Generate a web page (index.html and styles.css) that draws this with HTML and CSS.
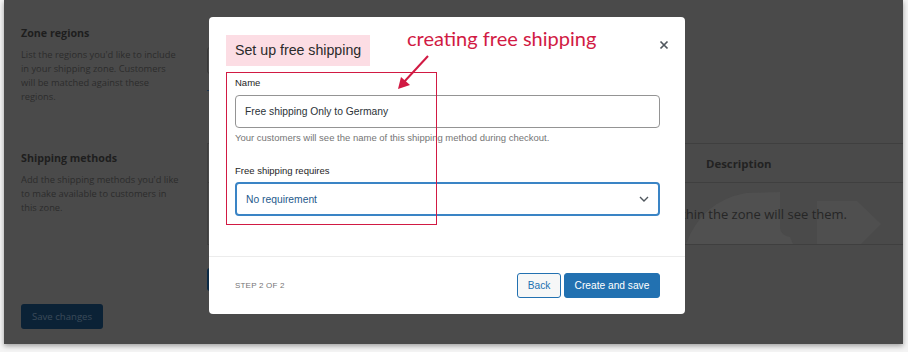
FILE: index.html
```html
<!DOCTYPE html>
<html>
<head>
<meta charset="utf-8">
<link rel="stylesheet" href="styles.css">
</head>
<body>
<div class="frame">
  <section class="sec sec1">
    <div class="desc">
      <h3>Zone regions</h3>
      <p>List the regions you'd like to include in your shipping zone. Customers will be matched against these regions.</p>
    </div>
    <div class="content c1">
      <div class="bg-input"></div>
      <span class="bg-link"></span>
    </div>
  </section>
  <section class="sec sec2">
    <div class="desc">
      <h3>Shipping methods</h3>
      <p>Add the shipping methods you'd like to make available to customers in this zone.</p>
    </div>
    <div class="content">
      <div class="tbl">
        <div class="thead"><span class="th-desc">Description</span></div>
        <div class="trow">
          <svg class="watermark" width="210" height="61" viewBox="0 0 210 61">
            <path d="M6 61 Q22 18 66 10 L100 9 L100 44 Q100 52 110 54 L113 61 Z" fill="#505050"/>
            <path d="M137 18 L177 18 L201 41 L181 61 L137 61 Z" fill="#4f4f4f"/>
          </svg>
          <span class="row-text">Only customers within the zone will see them.</span>
        </div>
      </div>
      <div class="bg-btn"></div>
    </div>
  </section>
  <button class="save">Save changes</button>

  <div class="modal">
    <div class="m-head">
      <h2 class="m-title">Set up free shipping</h2>
      <button class="m-close" aria-label="Close">
        <svg width="10" height="10" viewBox="0 0 10 10"><path d="M1.5 1.5l7 7M8.5 1.5l-7 7" stroke="#50575e" stroke-width="1.7" fill="none"/></svg>
      </button>
    </div>
    <div class="m-body">
      <label class="m-label">Name</label>
      <div class="m-input">Free shipping Only to Germany</div>
      <p class="m-help">Your customers will see the name of this shipping method during checkout.</p>
      <label class="m-label l2">Free shipping requires</label>
      <div class="m-select">
        <span>No requirement</span>
        <svg width="10" height="6" viewBox="0 0 10 6"><path d="M1 1l4 4 4-4" stroke="#50575e" stroke-width="1.4" fill="none"/></svg>
      </div>
    </div>
    <div class="m-foot">
      <span class="step">STEP 2 OF 2</span>
      <div class="btns">
        <button class="b-back">Back</button>
        <button class="b-create">Create and save</button>
      </div>
    </div>

    <div class="anno-box"></div>
    <div class="anno-text">creating free shipping</div>
    <svg class="anno-arrow" width="40" height="40" viewBox="0 0 40 40">
      <path d="M36 2 L12 28" stroke="#d11a43" stroke-width="2" fill="none"/>
      <path d="M6 35 L9 23 L18 31 Z" fill="#d11a43"/>
    </svg>
  </div>
</div>
</body>
</html>
```
FILE: styles.css
```css
html, body {
  margin: 0;
  padding: 0;
}
body {
  width: 908px;
  height: 352px;
  overflow: hidden;
  background: #f4f4f4;
}
.frame {
  position: relative;
  margin-left: 4px;
  width: 899px;
  height: 344px;
  background: #4a4a4a;
  box-shadow: 0 2px 5px rgba(0, 0, 0, 0.35);
  padding-left: 17px;
  box-sizing: border-box;
  font-family: "Open Sans", sans-serif;
  overflow: hidden;
}
.sec {
  display: grid;
  grid-template-columns: 186px 696px;
}
.sec1 {
  height: 143px;
}
.desc h3 {
  margin: 0;
  font-size: 10.7px;
  line-height: 14px;
  font-weight: 700;
  color: #1e1e1e;
}
.desc p {
  margin: 8px 0 0;
  width: 161px;
  font-size: 9.3px;
  line-height: 14px;
  color: #2c2c2c;
}
.sec1 .desc {
  padding-top: 26px;
}
.sec2 .desc {
  padding-top: 8px;
}
.c1 {
  padding-top: 47px;
}
.bg-input {
  height: 25px;
  width: 400px;
  border: 1px solid #3a3a3a;
  border-radius: 3px;
}
.bg-link {
  display: block;
  margin-top: 16px;
  width: 60px;
  height: 1px;
  background: #1c3550;
}
.tbl {
  border: 1px solid #3f3f3f;
  border-right: none;
}
.thead {
  height: 38px;
  border-bottom: 1px solid #3f3f3f;
  display: flex;
  align-items: center;
}
.th-desc {
  margin-left: 498px;
  font-size: 11.4px;
  font-weight: 700;
  color: #222;
}
.trow {
  position: relative;
  height: 61px;
  display: flex;
  align-items: center;
  justify-content: flex-end;
  padding-right: 56px;
  overflow: hidden;
}
.watermark {
  position: absolute;
  left: 472px;
  top: 0;
}
.row-text {
  position: relative;
  white-space: nowrap;
  font-size: 13px;
  color: #262626;
}
.bg-btn {
  margin-top: 23px;
  width: 120px;
  height: 23px;
  border-radius: 3px;
  background: #0b2a45;
}
.save {
  display: block;
  margin-top: 13px;
  width: 82px;
  height: 25px;
  padding: 0;
  border: none;
  border-radius: 3px;
  background: #0b2236;
  color: #3b4b5a;
  font-family: "Open Sans", sans-serif;
  font-size: 9.6px;
}

/* modal */
.modal {
  position: absolute;
  left: 205px;
  top: 17px;
  width: 476px;
  height: 297px;
  background: #fff;
  border-radius: 4px;
  display: flex;
  flex-direction: column;
  font-family: "Liberation Sans", Arial, sans-serif;
  color: #1e1e1e;
}
.m-head {
  display: flex;
  justify-content: space-between;
  align-items: flex-start;
  padding: 18px 15px 0 17px;
}
.m-title {
  margin: 0;
  height: 31px;
  line-height: 31px;
  padding: 0 9px;
  background: #fcdde4;
  font-size: 14.2px;
  font-weight: 400;
  color: #2a2a2a;
}
.m-close {
  margin-top: 4px;
  width: 12px;
  height: 12px;
  padding: 0;
  border: none;
  background: none;
  display: flex;
  align-items: center;
  justify-content: center;
}
.m-body {
  flex: 1;
  padding: 0 25px 0 26px;
  display: flex;
  flex-direction: column;
}
.m-label {
  display: block;
  margin-top: 11px;
  font-size: 9.5px;
  line-height: 12px;
  color: #1e1e1e;
}
.m-label.l2 {
  margin-top: 21px;
}
.m-input {
  margin-top: 6px;
  height: 33px;
  box-sizing: border-box;
  border: 1px solid #949494;
  border-radius: 4px;
  padding: 0 9px;
  display: flex;
  align-items: center;
  font-size: 10.3px;
  color: #2c3338;
}
.m-help {
  margin: 4px 0 0;
  font-size: 9.5px;
  line-height: 12px;
  color: #757575;
}
.m-select {
  margin-top: 5px;
  height: 34px;
  box-sizing: border-box;
  border: 2px solid #3a84c5;
  border-radius: 4px;
  padding: 0 9px 0 9px;
  display: flex;
  align-items: center;
  justify-content: space-between;
  font-size: 10.3px;
  color: #1f5a8c;
}
.m-foot {
  height: 58px;
  box-sizing: border-box;
  border-top: 1px solid #ececec;
  padding: 0 25px 0 26px;
  display: flex;
  align-items: center;
  justify-content: space-between;
}
.step {
  font-size: 8px;
  letter-spacing: 0.2px;
  color: #757575;
}
.btns {
  display: flex;
  gap: 3px;
}
.btns button {
  height: 25px;
  box-sizing: border-box;
  border-radius: 3px;
  font-family: "Liberation Sans", Arial, sans-serif;
  font-size: 10.2px;
  padding: 0;
}
.b-back {
  width: 44px;
  border: 1px solid #2271b1;
  background: #f6f7f7;
  color: #2271b1;
}
.b-create {
  width: 96px;
  border: 1px solid #2271b1;
  background: #2271b1;
  color: #fff;
}
.anno-box {
  position: absolute;
  left: 17px;
  top: 55px;
  width: 211px;
  height: 153px;
  box-sizing: border-box;
  border: 1px solid #d11a43;
}
.anno-text {
  position: absolute;
  left: 198px;
  top: 9px;
  font-family: Lato, sans-serif;
  font-size: 20px;
  line-height: 24px;
  color: #d11a43;
}
.anno-arrow {
  position: absolute;
  left: 183px;
  top: 37px;
}
```
